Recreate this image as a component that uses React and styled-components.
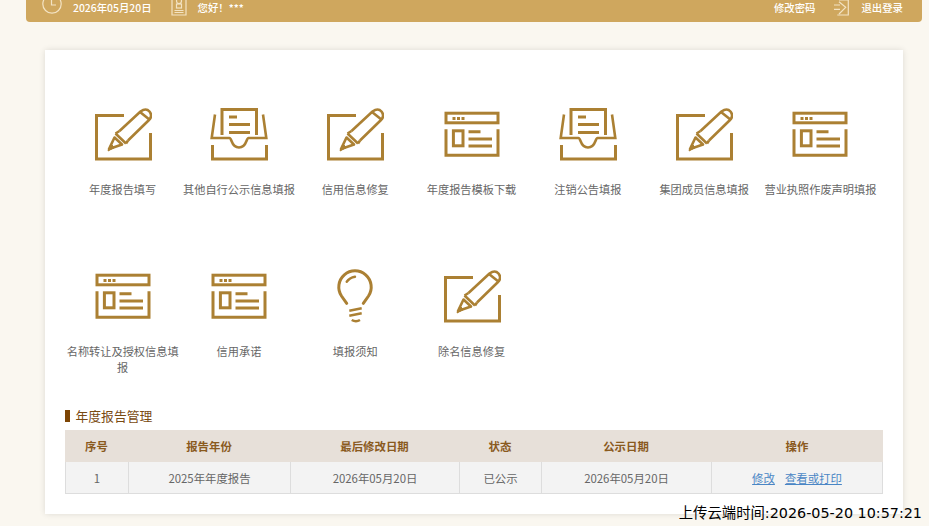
import React from 'react'
import styled, { createGlobalStyle } from 'styled-components'

const FONT = '"Noto Sans CJK SC", "Liberation Sans", sans-serif'

const GlobalStyle = createGlobalStyle`
    html, body {
        margin: 0;
        height: 100%;
        background: #faf7f0;
        overflow: hidden;
        font-family: ${FONT};
    }
`

const Page = styled.div`
    position: relative;
    width: 929px;
    height: 526px;
    overflow: hidden;
`

const TopBar = styled.div`
    display: flex;
    align-items: center;
    justify-content: space-between;
    height: 30px;
    margin: -8px 7px 0 26px;
    padding: 0 19px 0 16px;
    background: #cfa75e;
    border-radius: 0 0 4px 4px;
    color: #fff;
    font-size: 10.4px;
    font-weight: 500;
`

const BarGroup = styled.div`
    display: flex;
    align-items: center;
`

const BarIcon = styled.svg`
    flex: none;
    fill: none;
    stroke: #f3e3c3;
    stroke-width: 1.2;
    margin-top: ${({ $top }) => $top || 0}px;
    margin-right: ${({ $gap }) => $gap}px;
    margin-left: ${({ $left }) => $left || 0}px;
`

const Card = styled.div`
    width: 818px;
    height: 407px;
    margin: 28px 0 0 45px;
    padding: 57px 20px 0;
    background: #fff;
    box-shadow: 0 0 6px rgba(0, 0, 0, 0.12);
`

const MenuGrid = styled.div`
    display: grid;
    grid-template-columns: repeat(7, 116.3px);
    row-gap: 72px;
    margin-left: -0.5px;
`

const MenuItem = styled.div`
    display: flex;
    flex-direction: column;
    align-items: center;
    color: #666;
    font-size: 11.2px;
    line-height: 16px;
    text-align: center;
`

const MenuIcon = styled.svg`
    display: block;
    width: 58px;
    height: 54px;
    margin-bottom: 20px;
    fill: none;
    stroke: #ab8033;
    stroke-width: 3;
`

const SectionTitle = styled.div`
    display: flex;
    align-items: center;
    height: 16px;
    margin-top: 33px;
    color: #7a4a12;
    font-size: 12.8px;
    line-height: 16px;

    &::before {
        content: '';
        width: 4.5px;
        height: 12px;
        margin-right: 6px;
        background: #7d4504;
    }
`

const Table = styled.table`
    width: 818px;
    margin-top: 6px;
    border-collapse: separate;
    border-spacing: 0;
    table-layout: fixed;
    font-size: 11.4px;
`

const Th = styled.th`
    height: 32px;
    padding: 0;
    background: #e7e0d9;
    color: #8a5a1e;
    font-size: 11.4px;
    font-weight: 700;
`

const Td = styled.td`
    height: 31px;
    padding: 0;
    background: #f3f3f3;
    border-left: 1px solid #ddd;
    border-bottom: 1px solid #ddd;
    color: #666;
    text-align: center;

    &:last-child {
        border-right: 1px solid #ddd;
    }
`

const TableLink = styled.a`
    margin: 0 5px;
    color: #4a86c5;
    text-decoration: underline;
`

const UploadTime = styled.div`
    position: absolute;
    right: 7px;
    bottom: 5px;
    color: #000;
    font-family: "DejaVu Sans", "Noto Sans CJK SC", sans-serif;
    font-size: 14.35px;
    line-height: 16px;
    white-space: nowrap;
`

const PencilIcon = () => (
    <MenuIcon viewBox="0 0 58 54">
        <path d="M30 8.5H2.5V52H56.5V26" />
        <g strokeWidth="2.6" strokeLinejoin="round">
            <path d="M15 42 20.5 30.5 28 37.5Z" />
            <path d="M21.5 26.5 32 36.5" />
            <path d="M25.5 24 46.5 4.5Q52 0.5 55.5 4.5 59 9 55 13L34 33.5" />
            <path d="M25.5 24 21.5 26.5M34 33.5 32 36.5" />
            <path d="M46 5 56 13" />
        </g>
        <path d="M14 44 17 37 20.5 40.5Z" fill="#ab8033" strokeWidth="1" />
    </MenuIcon>
)

const TrayIcon = () => (
    <MenuIcon viewBox="0 0 58 54">
        <path d="M5 7.5 1.7 31H19.5C22 31 21 40.5 29 40.5 37 40.5 36 31 38.5 31H56.3L53 7.5" strokeWidth="2.6" />
        <path d="M12 28V2.5H46.5V28" />
        <path d="M19 10H27M19 17.5H40M19 25.5H40" />
        <path d="M2.5 38V52H56.5V38" />
    </MenuIcon>
)

const WindowIcon = () => (
    <MenuIcon viewBox="0 0 58 54">
        <rect x="3" y="6.2" width="52" height="9.6" />
        <path d="M9.5 11.5H12.5M14 11.5H17M18.5 11.5H21.5" />
        <path d="M3 22.3V48.2H55V22.3" />
        <rect x="10.4" y="23.8" width="9.6" height="15" />
        <path d="M25.5 24.7H37.5M25.5 32H49M25.5 39H49" />
    </MenuIcon>
)

const BulbIcon = () => (
    <MenuIcon viewBox="0 0 58 54">
        <path d="M20.7 34.3 15.5 27A16.2 16.2 0 1 1 42.5 27L37.3 34.3" strokeLinecap="round" />
        <path d="M20.7 12.7Q23.5 8.7 29 7.7" strokeWidth="2.4" strokeLinecap="round" />
        <path d="M23.3 41.7 35.7 39.3M23.3 46.7 35.7 44.3M25.7 51Q30 53.5 34 51" strokeWidth="2.5" />
    </MenuIcon>
)

const menuRows = [
    ['年度报告填写', PencilIcon],
    ['其他自行公示信息填报', TrayIcon],
    ['信用信息修复', PencilIcon],
    ['年度报告模板下载', WindowIcon],
    ['注销公告填报', TrayIcon],
    ['集团成员信息填报', PencilIcon],
    ['营业执照作废声明填报', WindowIcon],
    ['名称转让及授权信息填报', WindowIcon],
    ['信用承诺', WindowIcon],
    ['填报须知', BulbIcon],
    ['除名信息修复', PencilIcon],
]

const columns = [
    ['序号', 63],
    ['报告年份', 162],
    ['最后修改日期', 169],
    ['状态', 82],
    ['公示日期', 170],
    ['操作', 172],
]

const App = () => (
    <Page>
        <GlobalStyle />
        <TopBar>
            <BarGroup>
                <BarIcon $top={-6} $gap={11} width="20" height="20" viewBox="0 0 20 20">
                    <circle cx="10" cy="10" r="9.2" />
                    <path d="M9.5 4V11H14" />
                </BarIcon>
                <span>2026年05月20日</span>
                <BarIcon $top={-2} $left={19} $gap={11} width="16" height="20" viewBox="0 0 16 20">
                    <path d="M1 0V19H15V0M3.5 14.5H12.5M3.5 16.5H12.5" />
                    <circle cx="8" cy="5" r="2.5" />
                    <rect x="5.5" y="8" width="5" height="4" />
                </BarIcon>
                <span>您好！***</span>
            </BarGroup>
            <BarGroup>
                <span>修改密码</span>
                <BarIcon $left={19} $gap={12} width="15" height="20" viewBox="0 0 15 20">
                    <path d="M0 8H6M0 12.3H6M5 4.7 11.7 10.3 5 17" />
                    <path d="M5 3H14.3V18H3.3" />
                </BarIcon>
                <span>退出登录</span>
            </BarGroup>
        </TopBar>

        <Card>
            <MenuGrid>
                {menuRows.map(([label, Icon]) => (
                    <MenuItem key={label}>
                        <Icon />
                        {label}
                    </MenuItem>
                ))}
            </MenuGrid>

            <SectionTitle>年度报告管理</SectionTitle>
            <Table>
                <colgroup>
                    {columns.map(([title, width]) => (
                        <col key={title} width={width} />
                    ))}
                </colgroup>
                <thead>
                    <tr>
                        {columns.map(([title]) => (
                            <Th key={title}>{title}</Th>
                        ))}
                    </tr>
                </thead>
                <tbody>
                    <tr>
                        <Td>1</Td>
                        <Td>2025年年度报告</Td>
                        <Td>2026年05月20日</Td>
                        <Td>已公示</Td>
                        <Td>2026年05月20日</Td>
                        <Td>
                            <TableLink>修改</TableLink>
                            <TableLink>查看或打印</TableLink>
                        </Td>
                    </tr>
                </tbody>
            </Table>
        </Card>

        <UploadTime>上传云端时间:2026-05-20 10:57:21</UploadTime>
    </Page>
)

export default App
